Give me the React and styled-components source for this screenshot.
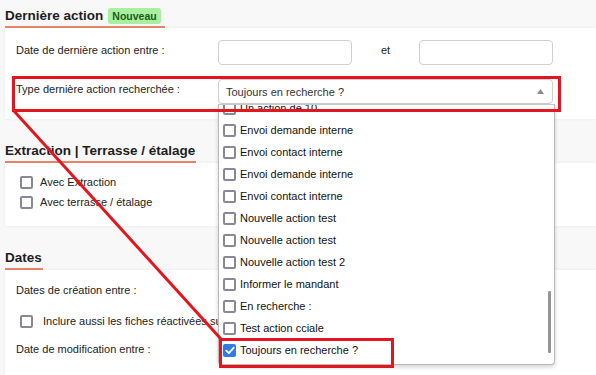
import React from "react";
import styled, { createGlobalStyle } from "styled-components";

const Global = createGlobalStyle`
  html, body { margin: 0; padding: 0; background: #f8f8f8; }
  body { font-family: "Liberation Sans", Arial, sans-serif; color: #222; }
  * { box-sizing: border-box; }
`;

const Page = styled.div`
  position: relative;
  width: 596px;
  height: 375px;
  overflow: hidden;
  padding: 7px 0 0 5px;
  background: #f8f8f8;
`;

const Section = styled.section`
  margin-top: ${(p) => (p.$first ? 0 : 23)}px;
`;

const Heading = styled.h2`
  display: flex;
  align-items: center;
  gap: 5px;
  width: fit-content;
  margin: 0;
  padding: 0 ${(p) => (p.$badge ? 4 : 1)}px 1px 0;
  font-size: 13.5px;
  line-height: 18px;
  font-weight: bold;
  color: #1e1e1e;
  border-bottom: 2px solid #e9866c;
`;

const Badge = styled.span`
  display: inline-flex;
  align-items: center;
  height: 16px;
  padding: 0 4px;
  border-radius: 3px;
  background: #a8ef9f;
  color: #1c5a1c;
  font-size: 10.5px;
  font-weight: bold;
`;

const Card = styled.div`
  background: #fff;
  box-shadow: 0 0 3px rgba(0, 0, 0, 0.07);
  padding: ${(p) => p.$pad};
`;

const FormGrid = styled.div`
  display: grid;
  grid-template-columns: 202px 134px 67px 134px;
  align-items: start;
`;

const Label = styled.div`
  padding-top: 3px;
  font-size: 11px;
  line-height: 14px;
  color: #222;
`;

const TextInput = styled.div`
  height: 25px;
  border: 1px solid #cfcfcf;
  border-radius: 4px;
  background: #fff;
`;

const Et = styled.div`
  height: 25px;
  display: flex;
  align-items: center;
  justify-content: center;
  font-size: 11px;
  padding-bottom: 5px;
  color: #222;
`;

const SelectWrap = styled.div`
  position: relative;
  grid-column: 2 / span 3;
`;

const SelectBox = styled.div`
  height: 25px;
  display: flex;
  align-items: center;
  justify-content: space-between;
  padding: 0 8px 0 7px;
  border: 1px solid #cfcfcf;
  border-radius: 4px;
  background: #fff;
  font-size: 11px;
  color: #333;
`;

const DropList = styled.div`
  position: absolute;
  top: 100%;
  left: 0;
  width: calc(100% + 2px);
  height: 261px;
  background: #fff;
  border: 1px solid #b9b9b9;
  border-top-color: #c8c8c8;
  border-radius: 0 0 4px 4px;
  box-shadow: 0 2px 4px rgba(0, 0, 0, 0.18);
  overflow: hidden;
  z-index: 5;
`;

const DropItems = styled.div`
  margin-top: -8px;
  display: flex;
  flex-direction: column;
`;

const DropItem = styled.div`
  height: 22px;
  display: flex;
  align-items: center;
  gap: 4px;
  padding-left: 4px;
  font-size: 11px;
  color: #111;
`;

const Thumb = styled.div`
  position: absolute;
  right: 3px;
  top: 186px;
  width: 3px;
  height: 62px;
  border-radius: 1px;
  background: #959595;
`;

const Box = styled.span`
  flex: none;
  width: 13px;
  height: 13px;
  border-radius: 2px;
  border: ${(p) => (p.$checked ? "none" : "2px solid #8b8796")};
  background: ${(p) => (p.$checked ? "#2f7ee6" : "#fff")};
  display: inline-flex;
  align-items: center;
  justify-content: center;
`;

const CheckRow = styled.label`
  height: 20px;
  display: flex;
  align-items: center;
  gap: ${(p) => p.$gap || 7}px;
  font-size: 11px;
  color: #222;
`;

const CheckList = styled.div`
  display: flex;
  flex-direction: column;
`;

const InlineCheck = styled(CheckRow)`
  grid-column: 1 / span 4;
  margin: 6px 0 8px 4px;
  white-space: nowrap;
`;

const RowGap = styled.div`
  grid-column: 1 / span 4;
  height: ${(p) => p.$h}px;
`;

const Overlay = styled.svg`
  position: absolute;
  left: 0;
  top: 0;
  pointer-events: none;
  z-index: 10;
`;

function Check({ checked }) {
  return (
    <Box $checked={checked}>
      {checked && (
        <svg width="10" height="9" viewBox="0 0 10 9">
          <path d="M1.3 4.6 L3.9 7.1 L8.8 1.6" fill="none" stroke="#fff" strokeWidth="1.8" strokeLinecap="round" strokeLinejoin="round" />
        </svg>
      )}
    </Box>
  );
}

const items = [
  "Un action de 10",
  "Envoi demande interne",
  "Envoi contact interne",
  "Envoi demande interne",
  "Envoi contact interne",
  "Nouvelle action test",
  "Nouvelle action test",
  "Nouvelle action test 2",
  "Informer le mandant",
  "En recherche :",
  "Test action cciale",
  "Toujours en recherche ?",
];

export default function App() {
  return (
    <>
      <Global />
      <Page>
        <Section $first>
          <Heading $badge>
            Dernière action <Badge>Nouveau</Badge>
          </Heading>
          <Card $pad="12px 0 15px 11px">
            <FormGrid>
              <Label>Date de dernière action entre :</Label>
              <TextInput />
              <Et>et</Et>
              <TextInput />
              <RowGap $h={14} />
              <Label>Type dernière action recherchée :</Label>
              <SelectWrap>
                <SelectBox>
                  <span>Toujours en recherche ?</span>
                  <svg width="7" height="5" viewBox="0 0 7 5">
                    <polygon points="0,5 7,5 3.5,0" fill="#8a8a8a" />
                  </svg>
                </SelectBox>
                <DropList>
                  <DropItems>
                    {items.map((t, i) => (
                      <DropItem key={i}>
                        <Check checked={i === items.length - 1} />
                        <span>{t}</span>
                      </DropItem>
                    ))}
                  </DropItems>
                  <Thumb />
                </DropList>
              </SelectWrap>
            </FormGrid>
          </Card>
        </Section>

        <Section>
          <Heading>Extraction | Terrasse / étalage</Heading>
          <Card $pad="9px 0 14px 15px">
            <CheckList>
              <CheckRow>
                <Check />
                Avec Extraction
              </CheckRow>
              <CheckRow>
                <Check />
                Avec terrasse / étalage
              </CheckRow>
            </CheckList>
          </Card>
        </Section>

        <Section>
          <Heading>Dates</Heading>
          <Card $pad="10px 0 15px 11px">
            <FormGrid>
              <Label>Dates de création entre :</Label>
              <TextInput />
              <Et>et</Et>
              <TextInput />
              <InlineCheck $gap={10}>
                <Check />
                Inclure aussi les fiches réactivées sur la période
              </InlineCheck>
              <Label>Date de modification entre :</Label>
              <TextInput />
              <Et>et</Et>
              <TextInput />
            </FormGrid>
          </Card>
        </Section>

        <Overlay width="596" height="375" viewBox="0 0 596 375">
          <rect x="13.5" y="77.5" width="546" height="33" fill="none" stroke="#e3161f" strokeWidth="3" />
          <line x1="14" y1="111" x2="221" y2="339" stroke="#e3161f" strokeWidth="3" />
          <rect x="220.5" y="339.5" width="172" height="27" fill="none" stroke="#e3161f" strokeWidth="3" />
        </Overlay>
      </Page>
    </>
  );
}
